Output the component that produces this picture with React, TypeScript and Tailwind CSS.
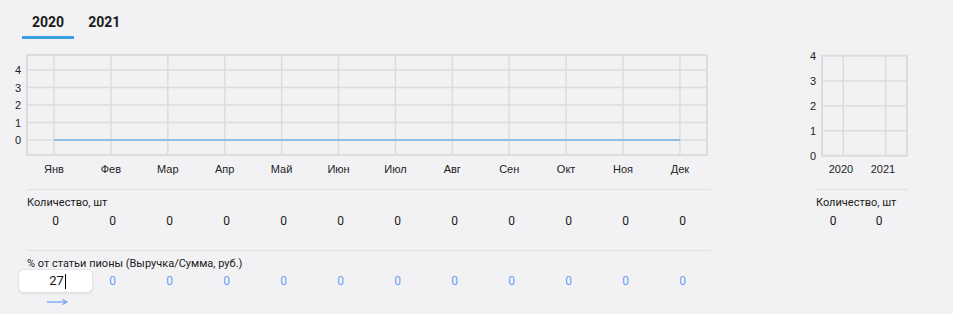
import React from "react";

const months = ["Янв","Фев","Мар","Апр","Май","Июн","Июл","Авг","Сен","Окт","Ноя","Дек"];
const xs = months.map((_, i) => 54 + i * 56.9);

function MainChart() {
  const hy = [70, 87.5, 105, 122.5, 140];
  return (
    <svg width={712} height={144} viewBox="0 45 712 144" className="block">
      <rect x={27} y={55} width={680} height={100} fill="none" stroke="#dcdcde" strokeWidth={2} />
      {hy.map((y) => (
        <line key={y} x1={27} x2={707} y1={y} y2={y} stroke="#dcdcde" strokeWidth={1.5} />
      ))}
      {xs.map((x) => (
        <line key={x} x1={x} x2={x} y1={55} y2={155} stroke="#dcdcde" strokeWidth={1.5} />
      ))}
      <line x1={54} x2={680} y1={140} y2={140} stroke="#8fc0e3" strokeWidth={2} />
      {[4, 3, 2, 1, 0].map((v, i) => (
        <text key={v} x={21} y={hy[i] + 4} textAnchor="end" fontSize={11} fill="#222" fontFamily="'Liberation Sans', Arial, sans-serif">{v}</text>
      ))}
      {months.map((m, i) => (
        <text key={m} x={xs[i]} y={173} textAnchor="middle" fontSize={11} fill="#222" fontFamily="'Liberation Sans', Arial, sans-serif">{m}</text>
      ))}
    </svg>
  );
}

function SideChart() {
  const hy = [55.7, 81, 105.7, 130.7, 155.7];
  return (
    <svg width={108} height={144} viewBox="805 45 108 144" className="block">
      <rect x={822} y={55.7} width={85} height={100} fill="none" stroke="#dcdcde" strokeWidth={2} />
      {[81, 105.7, 130.7].map((y) => (
        <line key={y} x1={822} x2={907} y1={y} y2={y} stroke="#dcdcde" strokeWidth={1.5} />
      ))}
      {[843.3, 885.7].map((x) => (
        <line key={x} x1={x} x2={x} y1={55.7} y2={155.7} stroke="#dcdcde" strokeWidth={1.5} />
      ))}
      {[4, 3, 2, 1, 0].map((v, i) => (
        <text key={v} x={816} y={hy[i] + 4} textAnchor="end" fontSize={11} fill="#222" fontFamily="'Liberation Sans', Arial, sans-serif">{v}</text>
      ))}
      <text x={841} y={173} textAnchor="middle" fontSize={11} fill="#222" fontFamily="'Liberation Sans', Arial, sans-serif">2020</text>
      <text x={883} y={173} textAnchor="middle" fontSize={11} fill="#222" fontFamily="'Liberation Sans', Arial, sans-serif">2021</text>
    </svg>
  );
}

export default function App() {
  return (
    <div className="w-[953px] h-[330px] bg-white" style={{ fontFamily: "Roboto, 'Noto Sans', sans-serif" }}>
      <div className="h-[314px] bg-[#f2f2f4] text-[#1a1a1a]">
        {/* tabs */}
        <div className="flex pl-[22px] pt-[13px]">
          <div className="px-[10px] h-[26px] border-b-[3px] border-[#3aa0e0] text-[14px] font-bold leading-[18px]">2020</div>
          <div className="ml-[4px] px-[10px] h-[26px] text-[14px] font-bold leading-[18px]">2021</div>
        </div>
        <div className="flex mt-[6px]">
          {/* left */}
          <div className="w-[712px] shrink-0">
            <MainChart />
            <div className="ml-[27px] w-[684px] h-[61px] border-t border-[#e1e1e3]">
              <div className="pt-[6px] text-[11px] leading-[14px]">Количество, шт</div>
              <div className="grid grid-cols-[repeat(12,57px)] mt-[3px] text-[12px] leading-[16px]">
                {months.map((m) => (
                  <div key={m} className="text-center">0</div>
                ))}
              </div>
            </div>
            <div className="ml-[27px] w-[684px] border-t border-[#e1e1e3]">
              <div className="pt-[6px] text-[11px] leading-[14px]">% от статьи пионы (Выручка/Сумма, руб.)</div>
              <div className="grid grid-cols-[repeat(12,57px)] mt-[-2px] items-center text-[12px] leading-[16px]">
                <div className="justify-self-center w-[75px] h-[24px] bg-white rounded-[6px] border border-[#e4e4e6] shadow-[0_1px_2px_rgba(0,0,0,0.08)] flex items-center justify-center text-[13px] text-[#111]">
                  <span className="ml-[4px]">27</span>
                  <span className="inline-block w-px h-[15px] bg-black ml-[1px]" />
                </div>
                {months.slice(1).map((m) => (
                  <div key={m} className="text-center text-[#6a9cf5]">0</div>
                ))}
              </div>
              <div className="ml-[20px] mt-[3px]">
                <svg width={21} height={10} viewBox="0 0 21 10" className="block">
                  <line x1={0} y1={6} x2={19.5} y2={6} stroke="#6a9cf5" strokeWidth={1.2} />
                  <path d="M15.5 3.5 L20 6 L15.5 8.5" stroke="#6a9cf5" strokeWidth={1.1} fill="none" />
                </svg>
              </div>
            </div>
          </div>
          {/* right */}
          <div className="ml-[93px] w-[108px] shrink-0">
            <SideChart />
            <div className="ml-[11px] w-[92px] border-t border-[#e1e1e3]">
              <div className="pt-[6px] text-[11px] leading-[14px]">Количество, шт</div>
              <div className="flex mt-[3px] text-[12px] leading-[16px]">
                <div className="w-[34px] text-center">0</div>
                <div className="w-[58px] text-center">0</div>
              </div>
            </div>
          </div>
        </div>
      </div>
    </div>
  );
}
